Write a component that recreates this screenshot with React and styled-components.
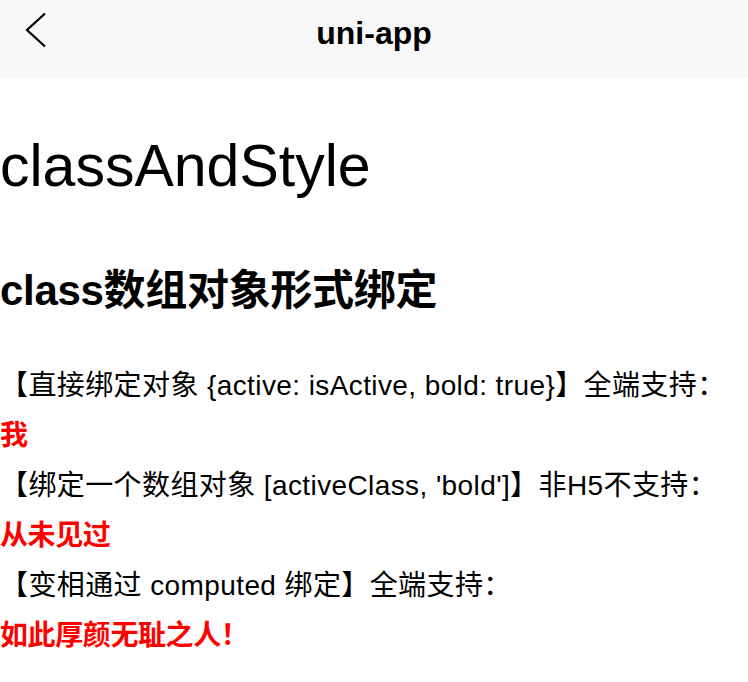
import React from 'react';
import styled, { createGlobalStyle } from 'styled-components';

const GlobalStyle = createGlobalStyle`
  html, body {
    margin: 0;
    padding: 0;
    background: #ffffff;
  }
  body {
    font-family: "Liberation Sans", "Noto Sans CJK SC", sans-serif;
    color: #000;
  }
`;

const NavBar = styled.header`
  height: 78px;
  background: #f8f8f8;
  display: grid;
  grid-template-columns: 1fr auto 1fr;
  align-items: start;
`;

const BackButton = styled.div`
  margin: 12px 0 0 24px;
  width: 24px;
  height: 36px;
  cursor: pointer;
`;

const NavTitle = styled.h3`
  margin: 17px 0 0;
  font-size: 32px;
  line-height: 32px;
  font-weight: 700;
`;

const Page = styled.main`
  padding: 0;
`;

const Title = styled.h1`
  margin: 53px 0 0;
  font-size: 59px;
  line-height: 70px;
  font-weight: 400;
`;

const SubTitle = styled.h2`
  margin: 65px 0 0;
  font-size: 42px;
  line-height: 50px;
  font-weight: 700;
  letter-spacing: -0.3px;
`;

const List = styled.div`
  margin-top: 45px;
`;

const Line = styled.div`
  font-size: 28px;
  line-height: 50px;
  white-space: nowrap;
  letter-spacing: ${(p) => (p.$hot ? '-0.4px' : '0.4px')};
  color: ${(p) => (p.$hot ? '#ff0000' : '#000')};
  font-weight: ${(p) => (p.$hot ? 700 : 400)};
`;

const rows = [
  { label: '【直接绑定对象 {active: isActive, bold: true}】全端支持：', value: '我' },
  { label: "【绑定一个数组对象 [activeClass, 'bold']】非H5不支持：", value: '从未见过' },
  { label: '【变相通过 computed 绑定】全端支持：', value: '如此厚颜无耻之人！' },
];

export default function App() {
  return (
    <>
      <GlobalStyle />
      <NavBar>
        <BackButton>
          <svg width="24" height="36" viewBox="0 0 24 36" fill="none">
            <polyline points="21,1.5 3,18 21,34.5" stroke="#000" strokeWidth="2.2" strokeLinejoin="miter" />
          </svg>
        </BackButton>
        <NavTitle>uni-app</NavTitle>
        <div />
      </NavBar>
      <Page>
        <Title>classAndStyle</Title>
        <SubTitle>class数组对象形式绑定</SubTitle>
        <List>
          {rows.map((r) => (
            <React.Fragment key={r.value}>
              <Line>{r.label}</Line>
              <Line $hot>{r.value}</Line>
            </React.Fragment>
          ))}
        </List>
      </Page>
    </>
  );
}
